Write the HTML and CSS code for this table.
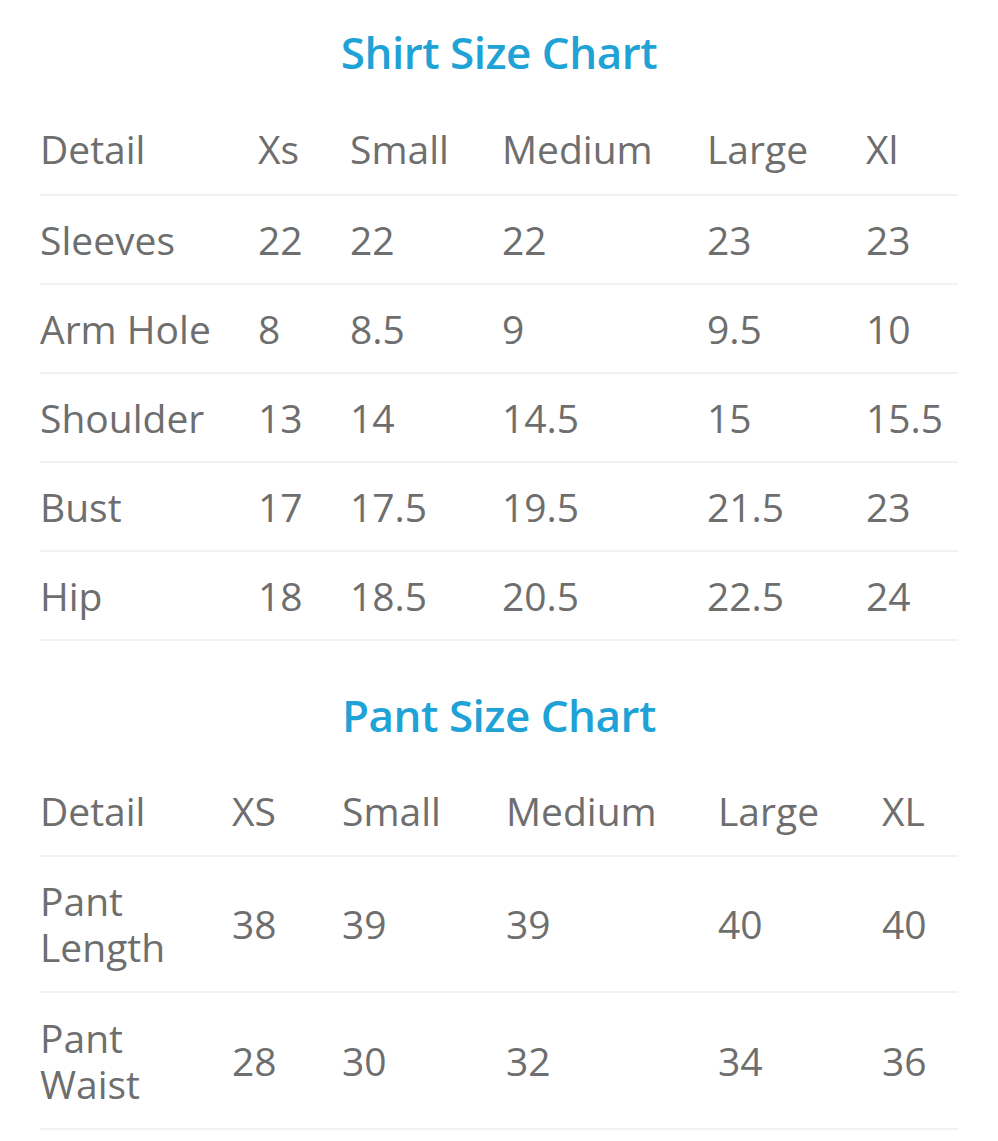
FILE: index.html
```html
<!DOCTYPE html>
<html lang="en">
<head>
<meta charset="utf-8">
<title>Size Chart</title>
<link rel="stylesheet" href="styles.css">
</head>
<body>
<main class="page">
  <section class="chart shirt">
    <h2 class="chart-title">Shirt Size Chart</h2>
    <table class="size-table">
      <colgroup>
        <col class="s1"><col class="s2"><col class="s3"><col class="s4"><col class="s5"><col class="s6">
      </colgroup>
      <thead>
        <tr class="head-row"><th>Detail</th><th>Xs</th><th>Small</th><th>Medium</th><th>Large</th><th>Xl</th></tr>
      </thead>
      <tbody>
        <tr><td>Sleeves</td><td>22</td><td>22</td><td>22</td><td>23</td><td>23</td></tr>
        <tr><td>Arm Hole</td><td>8</td><td>8.5</td><td>9</td><td>9.5</td><td>10</td></tr>
        <tr><td>Shoulder</td><td>13</td><td>14</td><td>14.5</td><td>15</td><td>15.5</td></tr>
        <tr><td>Bust</td><td>17</td><td>17.5</td><td>19.5</td><td>21.5</td><td>23</td></tr>
        <tr><td>Hip</td><td>18</td><td>18.5</td><td>20.5</td><td>22.5</td><td>24</td></tr>
      </tbody>
    </table>
  </section>
  <section class="chart pant">
    <h2 class="chart-title">Pant Size Chart</h2>
    <table class="size-table">
      <colgroup>
        <col class="p1"><col class="p2"><col class="p3"><col class="p4"><col class="p5"><col class="p6">
      </colgroup>
      <thead>
        <tr class="head-row"><th>Detail</th><th>XS</th><th>Small</th><th>Medium</th><th>Large</th><th>XL</th></tr>
      </thead>
      <tbody>
        <tr class="tall-row"><td><span class="line">Pant</span><span class="line">Length</span></td><td>38</td><td>39</td><td>39</td><td>40</td><td class="nudge">40</td></tr>
        <tr class="tall-row"><td><span class="line">Pant</span><span class="line">Waist</span></td><td>28</td><td>30</td><td>32</td><td>34</td><td>36</td></tr>
      </tbody>
    </table>
  </section>
</main>
</body>
</html>
```
FILE: styles.css
```css
* { box-sizing: border-box; }
html, body { margin: 0; padding: 0; background: #ffffff; }
body {
  font-family: "Open Sans", "Liberation Sans", sans-serif;
  color: #6e6e6e;
}
.page {
  padding: 0 40px;
  width: 998px;
}
.chart-title {
  margin: 0;
  text-align: center;
  font-size: 44px;
  font-weight: 600;
  line-height: 60px;
  color: #1fa2d6;
  letter-spacing: -0.5px;
}
.shirt .chart-title { padding: 22px 0 22px; }
.pant .chart-title { padding: 44px 0 22px; }

.size-table {
  width: 918px;
  table-layout: fixed;
  border-collapse: separate;
  border-spacing: 0;
}
.size-table th,
.size-table td {
  padding: 0;
  text-align: left;
  vertical-align: middle;
  font-size: 39px;
  font-weight: 400;
  line-height: 46px;
  color: #6e6e6e;
  border-bottom: 2px solid #f2f2f2;
  white-space: nowrap;
}
.line {
  display: block;
  height: 46px;
  line-height: 46px;
}
.shirt .head-row th { height: 92px; }
.shirt tbody td { height: 89px; }
.pant .head-row th { height: 90px; }
.pant .tall-row td { height: 136px; }
.pant .tall-row:last-child td { height: 137px; }
.nudge { padding-left: 2px; }

.s1 { width: 218px; }
.s2 { width: 92px; }
.s3 { width: 152px; }
.s4 { width: 205px; }
.s5 { width: 159px; }
.s6 { width: 92px; }

.p1 { width: 192px; }
.p2 { width: 110px; }
.p3 { width: 164px; }
.p4 { width: 212px; }
.p5 { width: 164px; }
.p6 { width: 76px; }
```
